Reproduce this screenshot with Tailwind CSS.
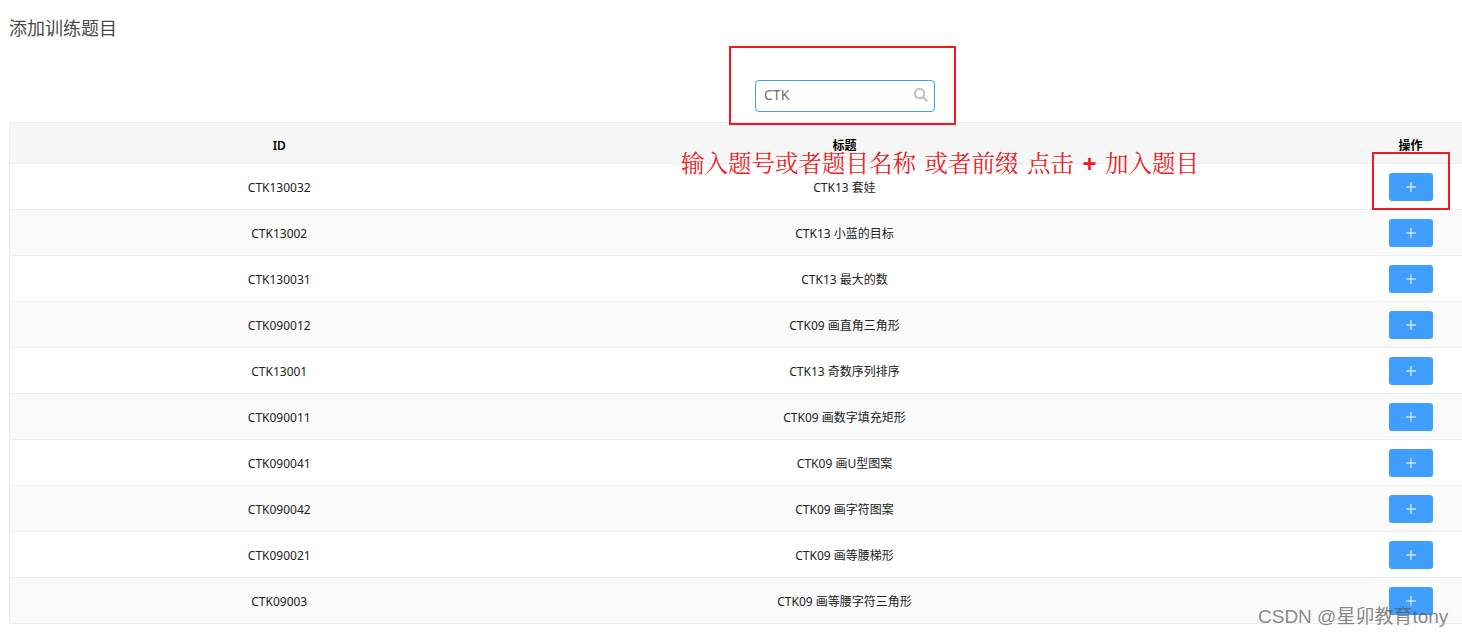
<!DOCTYPE html>
<html lang="zh-CN">
  <head>
    <meta charset="UTF-8" />
    <meta name="viewport" content="width=device-width, initial-scale=1.0" />
    <title>添加训练题目</title>
    <script src="https://cdn.jsdelivr.net/npm/@tailwindcss/browser@4"></script>
  </head>
  <body class="relative h-[637px] overflow-hidden bg-white font-['Noto_Sans','Noto_Sans_CJK_SC',sans-serif]">
    <div class="pl-[9px] pt-[15px]">
      <!-- Title -->
      <h1 class="h-[26px] text-[18px] leading-[26px] font-normal text-[#494949]">添加训练题目</h1>

      <!-- Search -->
      <div class="ml-[746px] mt-[39px] flex h-[32px] w-[180px] items-center justify-between rounded-[4px] border border-[#409eff] pl-2 pr-[6px]">
        <span class="-mt-[3px] text-[14px] text-[#6b6d72]">CTK</span>
        <svg class="-mt-[3px] h-[15px] w-[15px] text-[#c0c4cc]" viewBox="0 0 16 16" fill="none" stroke="currentColor" stroke-width="2.4">
          <circle cx="7" cy="7" r="5" />
          <path d="M11 11l3.5 3.5" stroke-linecap="round" />
        </svg>
      </div>

      <!-- Table -->
      <table class="mt-[10px] w-[1453px] table-fixed border-collapse border-t border-l border-[#ebeef5] text-center text-[12px] text-[#222]">
        <colgroup>
          <col class="w-[539px]" />
          <col class="w-[810px]" />
          <col class="w-[104px]" />
        </colgroup>
        <thead>
          <tr class="h-[41px] bg-[#f6f6f6] text-black">
            <th class="pt-[5px] font-semibold">ID</th>
            <th class="pt-[5px] pr-[218px] font-semibold">标题</th>
            <th class="pt-[5px] font-semibold">操作</th>
          </tr>
        </thead>
        <tbody>
          <tr class="h-[46px] border-t border-[#ebeef5]">
            <td class="pt-[2px]">CTK130032</td><td class="pt-[2px] pr-[218px]">CTK13 套娃</td>
            <td><button class="mx-auto flex h-[28px] w-[44px] items-center justify-center rounded-[3px] bg-[#409eff]"><svg class="h-3 w-3" viewBox="0 0 12 12" stroke="white"><path d="M6 1v10M1 6h10" /></svg></button></td>
          </tr>
          <tr class="h-[46px] border-t border-[#ebeef5] bg-[#fafafa]">
            <td class="pt-[2px]">CTK13002</td><td class="pt-[2px] pr-[218px]">CTK13 小蓝的目标</td>
            <td><button class="mx-auto flex h-[28px] w-[44px] items-center justify-center rounded-[3px] bg-[#409eff]"><svg class="h-3 w-3" viewBox="0 0 12 12" stroke="white"><path d="M6 1v10M1 6h10" /></svg></button></td>
          </tr>
          <tr class="h-[46px] border-t border-[#ebeef5]">
            <td class="pt-[2px]">CTK130031</td><td class="pt-[2px] pr-[218px]">CTK13 最大的数</td>
            <td><button class="mx-auto flex h-[28px] w-[44px] items-center justify-center rounded-[3px] bg-[#409eff]"><svg class="h-3 w-3" viewBox="0 0 12 12" stroke="white"><path d="M6 1v10M1 6h10" /></svg></button></td>
          </tr>
          <tr class="h-[46px] border-t border-[#ebeef5] bg-[#fafafa]">
            <td class="pt-[2px]">CTK090012</td><td class="pt-[2px] pr-[218px]">CTK09 画直角三角形</td>
            <td><button class="mx-auto flex h-[28px] w-[44px] items-center justify-center rounded-[3px] bg-[#409eff]"><svg class="h-3 w-3" viewBox="0 0 12 12" stroke="white"><path d="M6 1v10M1 6h10" /></svg></button></td>
          </tr>
          <tr class="h-[46px] border-t border-[#ebeef5]">
            <td class="pt-[2px]">CTK13001</td><td class="pt-[2px] pr-[218px]">CTK13 奇数序列排序</td>
            <td><button class="mx-auto flex h-[28px] w-[44px] items-center justify-center rounded-[3px] bg-[#409eff]"><svg class="h-3 w-3" viewBox="0 0 12 12" stroke="white"><path d="M6 1v10M1 6h10" /></svg></button></td>
          </tr>
          <tr class="h-[46px] border-t border-[#ebeef5] bg-[#fafafa]">
            <td class="pt-[2px]">CTK090011</td><td class="pt-[2px] pr-[218px]">CTK09 画数字填充矩形</td>
            <td><button class="mx-auto flex h-[28px] w-[44px] items-center justify-center rounded-[3px] bg-[#409eff]"><svg class="h-3 w-3" viewBox="0 0 12 12" stroke="white"><path d="M6 1v10M1 6h10" /></svg></button></td>
          </tr>
          <tr class="h-[46px] border-t border-[#ebeef5]">
            <td class="pt-[2px]">CTK090041</td><td class="pt-[2px] pr-[218px]">CTK09 画U型图案</td>
            <td><button class="mx-auto flex h-[28px] w-[44px] items-center justify-center rounded-[3px] bg-[#409eff]"><svg class="h-3 w-3" viewBox="0 0 12 12" stroke="white"><path d="M6 1v10M1 6h10" /></svg></button></td>
          </tr>
          <tr class="h-[46px] border-t border-[#ebeef5] bg-[#fafafa]">
            <td class="pt-[2px]">CTK090042</td><td class="pt-[2px] pr-[218px]">CTK09 画字符图案</td>
            <td><button class="mx-auto flex h-[28px] w-[44px] items-center justify-center rounded-[3px] bg-[#409eff]"><svg class="h-3 w-3" viewBox="0 0 12 12" stroke="white"><path d="M6 1v10M1 6h10" /></svg></button></td>
          </tr>
          <tr class="h-[46px] border-t border-[#ebeef5]">
            <td class="pt-[2px]">CTK090021</td><td class="pt-[2px] pr-[218px]">CTK09 画等腰梯形</td>
            <td><button class="mx-auto flex h-[28px] w-[44px] items-center justify-center rounded-[3px] bg-[#409eff]"><svg class="h-3 w-3" viewBox="0 0 12 12" stroke="white"><path d="M6 1v10M1 6h10" /></svg></button></td>
          </tr>
          <tr class="h-[46px] border-y border-[#ebeef5] bg-[#fafafa]">
            <td class="pt-[2px]">CTK09003</td><td class="pt-[2px] pr-[218px]">CTK09 画等腰字符三角形</td>
            <td><button class="mx-auto flex h-[28px] w-[44px] items-center justify-center rounded-[3px] bg-[#409eff]"><svg class="h-3 w-3" viewBox="0 0 12 12" stroke="white"><path d="M6 1v10M1 6h10" /></svg></button></td>
          </tr>
        </tbody>
      </table>
    </div>

    <!-- Annotations drawn over the page -->
    <div class="absolute left-[729px] top-[46px] h-[79px] w-[227px] border-2 border-[#ed1c24]"></div>
    <div class="absolute left-[1372px] top-[152px] h-[58px] w-[78px] border-2 border-[#ed1c24]"></div>
    <div class="absolute left-[681px] top-[146px] whitespace-nowrap font-['Noto_Serif_CJK_SC','Noto_Sans_CJK_SC',serif] text-[23.5px] leading-[32px] [word-spacing:2.5px] text-[#ed1c24]">输入题号或者题目名称 或者前缀 点击 <b class="font-['Liberation_Sans'] text-[24px]">+</b> 加入题目</div>
    <div class="absolute left-[1258px] top-[605px] whitespace-nowrap font-['Liberation_Sans','Noto_Sans_CJK_SC',sans-serif] text-[19px] leading-[24px] text-[#555]/70">CSDN @星卯教育tony</div>
  </body>
</html>
